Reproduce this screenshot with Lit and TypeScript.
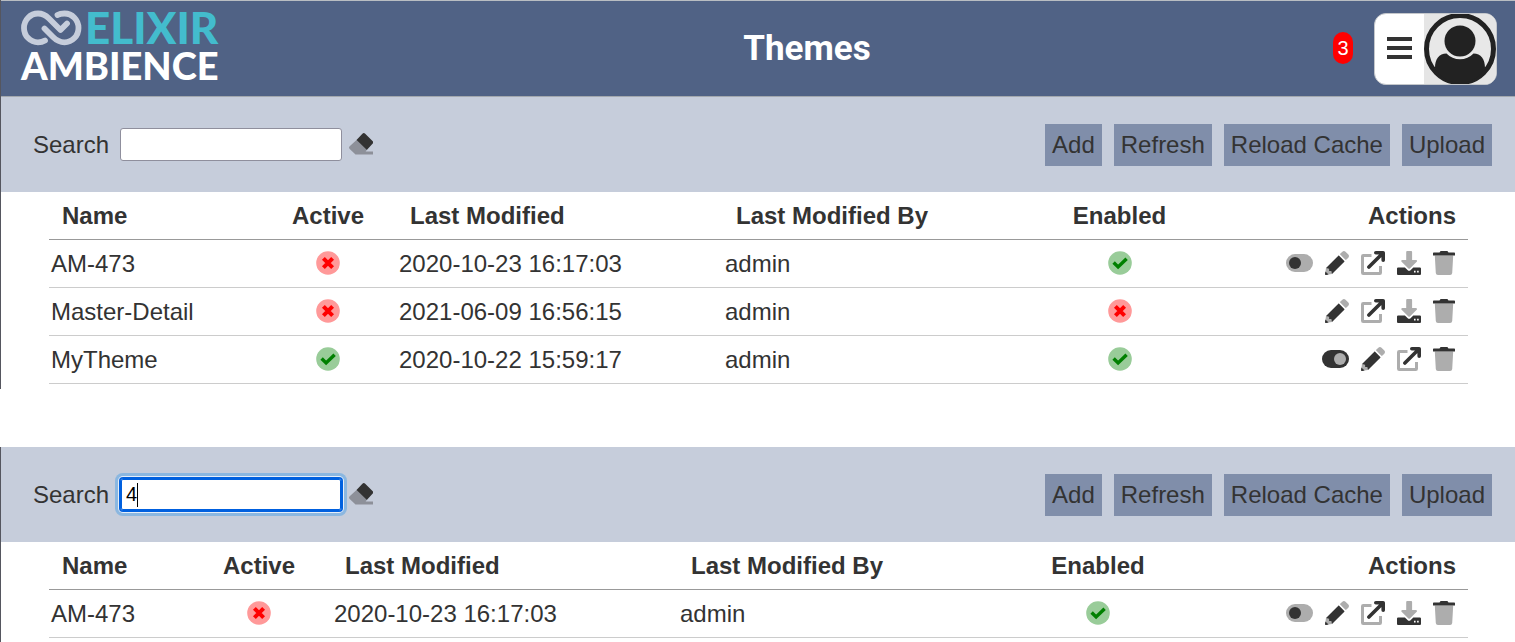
import { LitElement, html, css } from "lit";
import { customElement, property } from "lit/decorators.js";
import { classMap } from "lit/directives/class-map.js";

type Action = "off" | "on" | "edit" | "open" | "download" | "delete";

interface Theme {
  name: string;
  active: boolean;
  modified: string;
  by: string;
  enabled: boolean;
  actions: Action[];
}

const THEMES: Theme[] = [
  {
    name: "AM-473",
    active: false,
    modified: "2020-10-23 16:17:03",
    by: "admin",
    enabled: true,
    actions: ["off", "edit", "open", "download", "delete"],
  },
  {
    name: "Master-Detail",
    active: false,
    modified: "2021-06-09 16:56:15",
    by: "admin",
    enabled: false,
    actions: ["edit", "open", "download", "delete"],
  },
  {
    name: "MyTheme",
    active: true,
    modified: "2020-10-22 15:59:17",
    by: "admin",
    enabled: true,
    actions: ["on", "edit", "open", "delete"],
  },
];

const ACTION_LABELS: Record<Action, string> = {
  off: "Activate",
  on: "Deactivate",
  edit: "Edit",
  open: "Open",
  download: "Download",
  delete: "Delete",
};

const ACTION_ICONS = {
  off: html`<svg class="wide" viewBox="0 0 27 24">
    <rect class="soft" x="0" y="3" width="27" height="18" rx="9" />
    <circle class="ink" cx="9" cy="12" r="6" />
  </svg>`,
  on: html`<svg class="wide" viewBox="0 0 27 24">
    <rect class="ink" x="0" y="3" width="27" height="18" rx="9" />
    <circle class="soft" cx="18" cy="12" r="6" />
  </svg>`,
  edit: html`<svg viewBox="0 0 512 512">
    <path class="soft" d="M497.9 142.1l-46.1 46.1c-4.7 4.7-12.3 4.7-17 0l-111-111c-4.7-4.7-4.7-12.3 0-17l46.1-46.1c18.7-18.7 49.1-18.7 67.9 0l60.1 60.1c18.8 18.7 18.8 49.1 0 67.9zM21 362L160 340 172 400 150 490 0 512z" />
    <path class="ink" d="M284.2 99.8c4.7-4.7 12.3-4.7 17 0l111 111c4.7 4.7 4.7 12.3 0 17L149.7 490.4 136 424H88V376L21.6 362.4zM9 436L76 503 28 511.700C11 514-3 500 .4 484z" />
  </svg>`,
  open: html`<svg viewBox="0 0 24 24">
    <path class="soft" d="M2.200 3H10.500V6H3V21H18V15H21V21.800A2.200 2.200 0 0 1 18.800 24H2.200A2.200 2.200 0 0 1 0 21.800V5.200A2.200 2.200 0 0 1 2.200 3z" />
    <path class="line" d="M14.800 1.800H22.200V9.200M22 2 7.900 16.100" />
  </svg>`,
  download: html`<svg viewBox="0 0 24 24">
    <path class="soft" d="M10.100 0H14.200A.9.9 0 0 1 15.100.9V9H18.900C20 9 20.400 10.100 19.700 10.800L12.900 17.400A1.100 1.100 0 0 1 11.400 17.400L4.600 10.800C3.900 10.100 4.300 9 5.400 9H9.200V.9A.9.9 0 0 1 10.100 0z" />
    <path class="ink" fill-rule="evenodd" d="M1.100 16.500H7.900L10.500 19A2.300 2.300 0 0 0 13.800 19L16.300 16.500H22.900A1.100 1.100 0 0 1 24 17.600V22.900A1.100 1.100 0 0 1 22.900 24H1.100A1.100 1.100 0 0 1 0 22.900V17.600A1.100 1.100 0 0 1 1.100 16.500zM17 19.800V21.400H18.600V19.800zM20.100 19.800V21.400H21.700V19.800z" />
  </svg>`,
  delete: html`<svg class="slim" viewBox="0 0 22 24">
    <path class="soft" d="M1.800 4.500H20.200L19.200 22A2.200 2.200 0 0 1 17 24H5A2.200 2.200 0 0 1 2.800 22z" />
    <path class="ink" d="M7.600 0H14.400L15.500 1.500H21.300A.7.7 0 0 1 22 2.200V4.500H0V2.200A.7.7 0 0 1 .7 1.500H6.500z" />
  </svg>`,
};

const statusIcon = (on: boolean) =>
  on
    ? html`<svg class="status" viewBox="0 0 24 24" role="img" aria-label="Yes">
        <circle fill="#99cc99" cx="12" cy="12" r="11.800" />
        <path fill="none" stroke="#008000" stroke-width="3.500" d="M5.600 11.600 10.100 15.900 18.600 7.800" />
      </svg>`
    : html`<svg class="status" viewBox="0 0 24 24" role="img" aria-label="No">
        <circle fill="#ff9999" cx="12" cy="12" r="11.800" />
        <path fill="none" stroke="#ff0000" stroke-width="4" d="M7.400 7.400 16.600 16.600M16.600 7.400 7.400 16.600" />
      </svg>`;

@customElement("theme-header")
export class ThemeHeader extends LitElement {
  static styles = css`
    :host {
      display: flex;
      align-items: center;
      box-sizing: border-box;
      height: 97px;
      padding: 0 18px 0 20px;
      background: #506285;
      border-top: 1px solid #b9bdc2;
      border-bottom: 1px solid #a3a8ae;
      color: #fff;
    }
    .logo {
      display: flex;
      flex-direction: column;
      width: 200px;
      margin: 0 60px 6px 0;
      font-family: Lato, sans-serif;
      font-weight: 900;
    }
    .top {
      display: flex;
      align-items: center;
      gap: 2px;
      font-size: 44px;
      line-height: 38px;
      color: #43bccd;
    }
    .mark {
      width: 62px;
      height: 38px;
      flex: none;
    }
    .bottom {
      font-size: 38px;
      line-height: 38px;
    }
    .title {
      flex: 1;
      margin: 0;
      text-align: center;
      font: 700 35px/48px Roboto, sans-serif;
    }
    .badge {
      width: 20px;
      margin: 0 21px 2px 0;
      border-radius: 10px;
      background: #f00;
      text-align: center;
      font-size: 20px;
      line-height: 32px;
    }
    .menu {
      display: flex;
      align-items: center;
      box-sizing: border-box;
      height: 72px;
      padding: 0;
      border: 1px solid #c4c7cb;
      border-radius: 12px;
      background: #fff;
      overflow: hidden;
    }
    .bars {
      width: 25px;
      height: 24px;
      padding: 0 12px;
    }
    .avatar {
      width: 72px;
      height: 72px;
      background: #e5e5e5;
    }
  `;

  render() {
    return html`
      <div class="logo">
        <div class="top">
          <svg class="mark" viewBox="0 0 62 38" fill="none" stroke="#c6cddb" stroke-width="5.800" stroke-linecap="round" stroke-linejoin="round" aria-hidden="true">
            <path d="M24 32.500C21.500 34 19 34.300 17 34.300A14 14.400 0 0 1 17 5.500C22 5.500 25 7.500 28 10.500L39.500 22 46 15.500" />
            <path d="M36.500 7C38.500 5.800 41 5.500 43.500 5.500A14 14.400 0 0 1 43.500 34.300C38.500 34.300 35 32 32 29L23.500 20.500" />
          </svg>
          <span>ELIXIR</span>
        </div>
        <div class="bottom">AMBIENCE</div>
      </div>
      <h1 class="title">Themes</h1>
      <span class="badge">3</span>
      <button class="menu" aria-label="User menu">
        <svg class="bars" viewBox="0 0 25 24">
          <path fill="#333" d="M0 0h25v4H0zM0 9h25v4H0zM0 18h25v4H0z" />
        </svg>
        <svg class="avatar" viewBox="0 0 72 72">
          <circle cx="36" cy="36" r="33.500" fill="#e8e8e8" stroke="#222" stroke-width="5" />
          <circle cx="36" cy="28" r="15.500" fill="#222" />
          <path fill="#222" d="M11 55C11 46 15 40.500 22.500 40.500A18.500 18.500 0 0 0 49.500 40.500C57 40.500 61 46 61 55 55 65 46 70 36 70S17 65 11 55z" />
        </svg>
      </button>
    `;
  }
}

@customElement("theme-panel")
export class ThemePanel extends LitElement {
  @property() panelId = "";
  @property() query = "";
  @property({ attribute: false }) columns: number[] = [];

  static styles = css`
    :host {
      display: block;
      color: #333;
    }
    .toolbar {
      display: flex;
      align-items: center;
      justify-content: space-between;
      padding: 27px 23px 26px 32px;
      background: #c6cddb;
    }
    .search {
      display: flex;
      align-items: center;
      gap: 11px;
    }
    .buttons {
      display: flex;
      align-items: center;
      gap: 12px;
    }
    .field {
      position: relative;
      display: flex;
      margin-bottom: 2px;
    }
    .input {
      box-sizing: border-box;
      width: 222px;
      height: 33px;
      padding: 0 5px;
      border: 1px solid #8f8f9d;
      border-radius: 3px;
      outline: none;
      background: #fff;
      color: #000;
      font: 20px/24px "Liberation Sans", Arial, sans-serif;
    }
    .input.focused {
      border-color: #0060df;
      box-shadow: inset 0 0 0 1px #0060df, 0 0 0 1px #0060df,
        0 0 0 2px #e6eef8, 0 0 0 5px #8bb7e0;
    }
    .caret {
      position: absolute;
      left: 17px;
      top: 5px;
      width: 1px;
      height: 24px;
      background: #000;
    }
    .icon {
      display: flex;
      padding: 0;
      border: 0;
      background: none;
    }
    .erase {
      margin: 0 0 2px -4px;
    }
    .button {
      height: 42px;
      padding: 0 7px;
      border: 0;
      background: #808eaa;
      color: #333;
      font: inherit;
    }
    .list {
      padding: 0 47px 5px 48px;
      background: #fff;
    }
    .table {
      width: 100%;
      table-layout: fixed;
      border-collapse: separate;
      border-spacing: 0;
    }
    th,
    td {
      box-sizing: border-box;
      height: 48px;
      padding: 0 2px;
      border-bottom: 1px solid #ccc;
      text-align: left;
    }
    th {
      padding: 0 12px 0 13px;
      border-bottom-color: #999;
      font-weight: 700;
    }
    th.center {
      padding: 0 12px;
      text-align: center;
    }
    th.end {
      text-align: right;
    }
    .actions {
      display: flex;
      justify-content: flex-end;
      gap: 12px;
      padding: 0 11px 2px 0;
    }
    svg {
      width: 24px;
      height: 24px;
    }
    .status {
      display: block;
      margin: 0 auto 2px;
    }
    .wide {
      width: 27px;
    }
    .slim {
      width: 22px;
    }
    .ink {
      fill: #333;
    }
    .soft {
      fill: #adadad;
    }
    .line {
      fill: none;
      stroke: #333;
      stroke-width: 3.6;
      stroke-linecap: round;
      stroke-linejoin: round;
    }
  `;

  render() {
    const rows = THEMES.filter((t) => t.name.includes(this.query));
    const total = this.columns.reduce((a, b) => a + b, 0);
    const inputId = `${this.panelId}-search`;
    return html`
      <div class="toolbar">
        <div class="search">
          <label for=${inputId}>Search</label>
          <div class="field">
            <input id=${inputId} type="text" class=${classMap({ input: true, focused: this.query !== "" })} .value=${this.query} />
            ${this.query ? html`<span class="caret" aria-hidden="true"></span>` : ""}
          </div>
          <button class="icon erase" aria-label="Clear search">
            <svg viewBox="0 0 24 24">
              <path fill="#8d9099" d="M7.500 8 17.800 18 16.600 19.500H24V22.500H6.500L.7 17A2 2 0 0 1 .7 14.200z" />
              <path class="ink" d="M7.500 8 13.400 1.700A2 2 0 0 1 16.200 1.700L23.500 9A2 2 0 0 1 23.500 11.800L17.800 18z" />
            </svg>
          </button>
        </div>
        <div class="buttons">
          ${["Add", "Refresh", "Reload Cache", "Upload"].map((b) => html`<button class="button">${b}</button>`)}
        </div>
      </div>
      <div class="list">
        <table class="table">
          <colgroup>
            ${this.columns.map((w) => html`<col style="width:${(w / total) * 100}%" />`)}
          </colgroup>
          <thead>
            <tr>
              <th>Name</th>
              <th class="center">Active</th>
              <th>Last Modified</th>
              <th>Last Modified By</th>
              <th class="center">Enabled</th>
              <th class="end">Actions</th>
            </tr>
          </thead>
          <tbody>
            ${rows.map(
              (t) => html`<tr>
                <td>${t.name}</td>
                <td>${statusIcon(t.active)}</td>
                <td>${t.modified}</td>
                <td>${t.by}</td>
                <td>${statusIcon(t.enabled)}</td>
                <td>
                  <div class="actions">
                    ${t.actions.map((a) => html`<button class="icon" aria-label="${ACTION_LABELS[a]} ${t.name}">${ACTION_ICONS[a]}</button>`)}
                  </div>
                </td>
              </tr>`
            )}
          </tbody>
        </table>
      </div>
    `;
  }
}

@customElement("app-root")
export class AppRoot extends LitElement {
  static styles = css`
    :host {
      display: flex;
      flex-direction: column;
      gap: 58px;
      background: #fff;
      font: 24px/28px "Liberation Sans", Arial, sans-serif;
    }
    .screen {
      border-left: 1px solid #55565f;
    }
  `;

  render() {
    return html`
      <main class="screen">
        <theme-header></theme-header>
        <theme-panel panelId="all" .columns=${[210, 138, 326, 326, 141, 278]}></theme-panel>
      </main>
      <section class="screen">
        <theme-panel panelId="filtered" query="4" .columns=${[137, 146, 346, 346, 148, 296]}></theme-panel>
      </section>
    `;
  }
}
